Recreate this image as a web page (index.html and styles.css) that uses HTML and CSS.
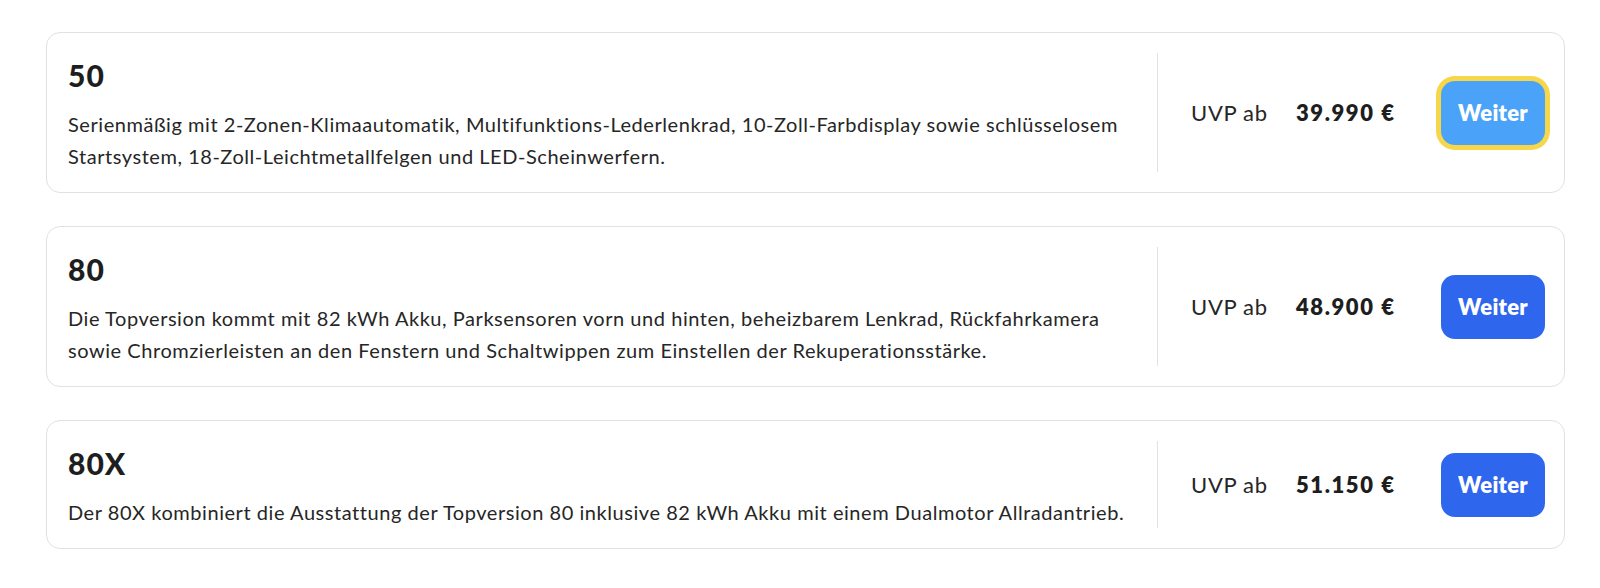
FILE: index.html
```html
<!DOCTYPE html>
<html lang="de">
<head>
<meta charset="utf-8">
<title>Versionen</title>
<link rel="stylesheet" href="styles.css">
</head>
<body>
<main class="list">
  <section class="card">
    <div class="info">
      <h2 class="title">50</h2>
      <p class="desc">Serienmäßig mit 2-Zonen-Klimaautomatik, Multifunktions-Lederlenkrad, 10-Zoll-Farbdisplay sowie schlüsselosem Startsystem, 18-Zoll-Leichtmetallfelgen und LED-Scheinwerfern.</p>
    </div>
    <div class="side">
      <span class="uvp">UVP ab</span>
      <span class="price">39.990 €</span>
      <button class="btn btn-focus">Weiter</button>
    </div>
  </section>
  <section class="card">
    <div class="info">
      <h2 class="title">80</h2>
      <p class="desc">Die Topversion kommt mit 82 kWh Akku, Parksensoren vorn und hinten, beheizbarem Lenkrad, Rückfahrkamera sowie Chromzierleisten an den Fenstern und Schaltwippen zum Einstellen der Rekuperationsstärke.</p>
    </div>
    <div class="side">
      <span class="uvp">UVP ab</span>
      <span class="price">48.900 €</span>
      <button class="btn">Weiter</button>
    </div>
  </section>
  <section class="card">
    <div class="info">
      <h2 class="title">80X</h2>
      <p class="desc">Der 80X kombiniert die Ausstattung der Topversion 80 inklusive 82 kWh Akku mit einem Dualmotor Allradantrieb.</p>
    </div>
    <div class="side">
      <span class="uvp">UVP ab</span>
      <span class="price">51.150 €</span>
      <button class="btn">Weiter</button>
    </div>
  </section>
</main>
</body>
</html>
```
FILE: styles.css
```css
* { box-sizing: border-box; }
html, body { margin: 0; padding: 0; background: #ffffff; }
body {
  font-family: "Lato", "Open Sans", "Liberation Sans", sans-serif;
  color: #222222;
}
.list {
  display: flex;
  flex-direction: column;
  gap: 33px;
  padding: 32px 35px 0 46px;
}
.card {
  display: flex;
  align-items: stretch;
  border: 1px solid #e1e1e1;
  border-radius: 14px;
  padding: 20px 19px 20px 21px;
}
.info {
  flex: 1;
  min-width: 0;
  padding: 6px 20px 0 0;
}
.title {
  margin: 0;
  font-size: 30px;
  line-height: 32px;
  font-weight: 900;
  letter-spacing: 1px;
  color: #1e1e1e;
}
.desc {
  margin: 17px 0 0;
  font-size: 20px;
  line-height: 32px;
  letter-spacing: 0.55px;
  color: #262626;
}
.side {
  flex: 0 0 388px;
  display: flex;
  align-items: center;
  border-left: 1px solid #e1e1e1;
  padding-left: 33px;
}
.uvp {
  font-size: 22px;
  letter-spacing: 0.7px;
  color: #262626;
}
.price {
  width: 120px;
  margin-left: 18px;
  text-align: center;
  font-size: 22px;
  font-weight: 800;
  letter-spacing: 1.6px;
  color: #1e1e1e;
}
.btn {
  margin-left: auto;
  width: 104px;
  height: 64px;
  border: none;
  border-radius: 14px;
  background: #2f66ee;
  color: #ffffff;
  font-family: inherit;
  font-size: 22px;
  font-weight: 800;
  letter-spacing: 0.3px;
  cursor: pointer;
}
.btn-focus {
  background: #4aa3f8;
  box-shadow: 0 0 0 5px #f7d64a;
}
```
